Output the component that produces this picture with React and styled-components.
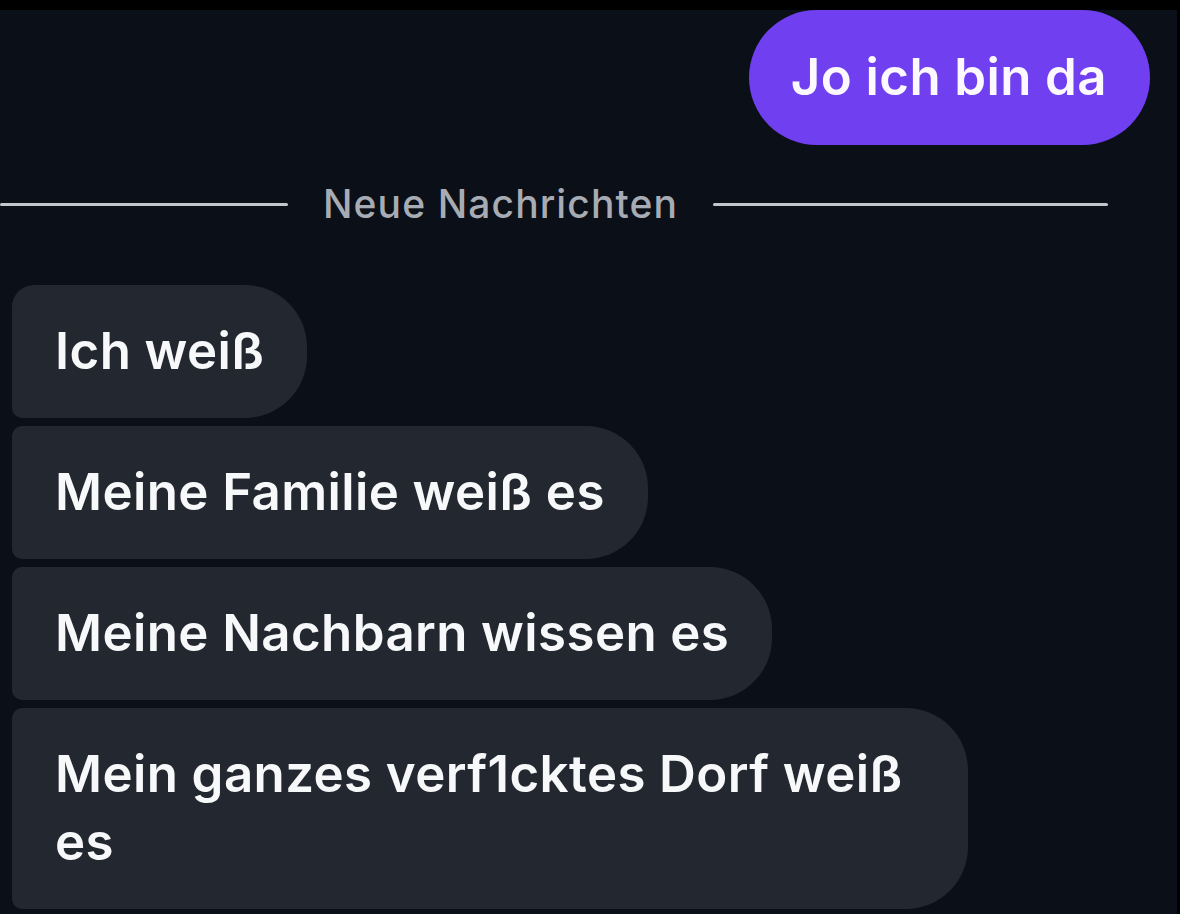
import React from "react";
import styled, { createGlobalStyle } from "styled-components";

const GlobalStyle = createGlobalStyle`
  html, body {
    margin: 0;
    padding: 0;
    background: #000;
  }
  body {
    font-family: Inter, "Noto Sans", "Liberation Sans", sans-serif;
    -webkit-font-smoothing: antialiased;
  }
  * {
    box-sizing: border-box;
  }
`;

const Screen = styled.div`
  margin: 10px 3px 0 0;
  height: 904px;
  background: #0b0f17;
  overflow: hidden;
  display: flex;
  flex-direction: column;
`;

const OwnRow = styled.div`
  display: flex;
  justify-content: flex-end;
  padding-right: 27px;
`;

const OwnBubble = styled.div`
  background: #6f3ff0;
  color: #fbf8ff;
  font-size: 51px;
  font-weight: 600;
  line-height: 68px;
  letter-spacing: 0.4px;
  padding: 33px 43px 34px 42px;
  border-radius: 68px;
  white-space: nowrap;
`;

const Divider = styled.div`
  display: grid;
  grid-template-columns: 288px auto 1fr;
  align-items: center;
  column-gap: 35px;
  padding-right: 69px;
  margin: 37px 0 59px;
`;

const Line = styled.div`
  height: 3px;
  background: #c3c6cc;
  border-radius: 2px;
`;

const DividerText = styled.span`
  color: #a7abb3;
  font-size: 39px;
  font-weight: 500;
  line-height: 44px;
  letter-spacing: 1.1px;
`;

const Thread = styled.div`
  display: flex;
  flex-direction: column;
  align-items: flex-start;
  gap: 8px;
  padding-left: 12px;
`;

const Bubble = styled.div`
  background: #23272f;
  color: #f7f8fa;
  font-size: 51px;
  font-weight: 600;
  line-height: 68px;
  letter-spacing: 0.4px;
  padding: 32px 43px 33px 43px;
  max-width: ${(p) => p.$max || "none"};
  border-radius: ${(p) =>
    p.$first ? "22px 62px 62px 10px" : "10px 62px 62px 10px"};
`;

const messages = [
  "Ich weiß",
  "Meine Familie weiß es",
  "Meine Nachbarn wissen es",
  "Mein ganzes verf1cktes Dorf weiß es",
];

const App = () => {
  return (
    <>
      <GlobalStyle />
      <Screen>
        <OwnRow>
          <OwnBubble>Jo ich bin da</OwnBubble>
        </OwnRow>
        <Divider>
          <Line />
          <DividerText>Neue Nachrichten</DividerText>
          <Line />
        </Divider>
        <Thread>
          {messages.map((text, i) => (
            <Bubble key={i} $first={i === 0} $max="956px">
              {text}
            </Bubble>
          ))}
        </Thread>
      </Screen>
    </>
  );
};

export default App;
